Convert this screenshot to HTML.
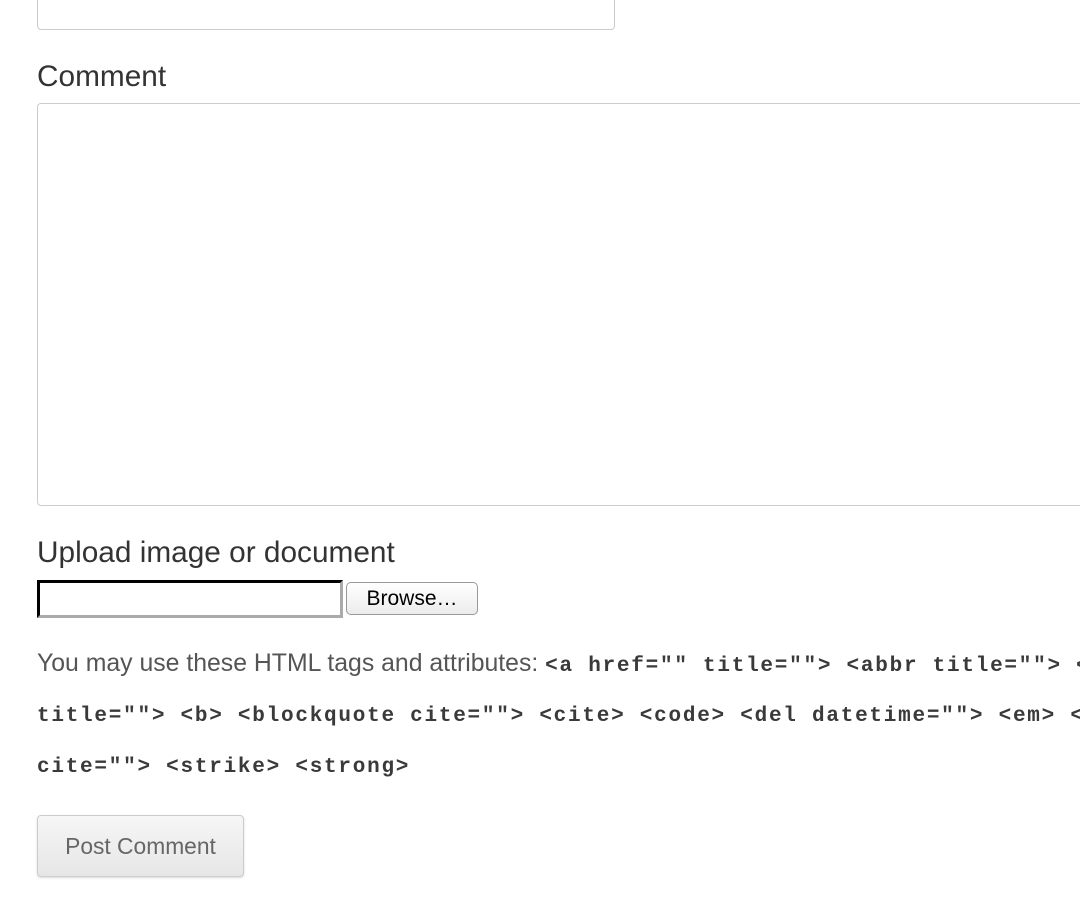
<!DOCTYPE html>
<html><head><style>
html,body{margin:0;width:1080px;height:908px;overflow:hidden}
body{background:#fff;font-family:"Liberation Sans",sans-serif;color:#3a3a3a}
#w{position:relative;width:1080px;height:908px;overflow:hidden}
.a{position:absolute}
.lbl{font-size:29.8px;color:#333;white-space:nowrap}
.code{font-family:"Liberation Mono",monospace;font-weight:bold;font-size:21px;letter-spacing:1.75px;color:#3a3a3a;white-space:nowrap}
.t{font-size:24.8px;color:#555;white-space:nowrap}
</style></head><body><div id="w">
<div class="a" style="left:37px;top:-10px;width:576px;height:38px;border:1px solid #ccc;border-radius:4px"></div>
<div class="a lbl" style="left:37px;top:60px">Comment</div>
<div class="a" style="left:37px;top:103px;width:1100px;height:401px;border:1px solid #ccc;border-radius:4px"></div>
<div class="a lbl" style="left:37px;top:536px">Upload image or document</div>
<div class="a" style="left:37px;top:580px;width:300px;height:32px;border-style:solid;border-width:3px;border-color:#000 #aaa #aaa #000;background:#fff"></div>
<div class="a" style="left:346px;top:582px;width:130px;height:31px;border:1px solid #999;border-radius:5px;background:linear-gradient(#fff,#ececec);font-size:21px;color:#000;text-align:center;line-height:31px">Browse…</div>
<div class="a t" style="left:37px;top:650px">You may use these HTML tags and attributes: <span class="code">&lt;a href="" title=""&gt; &lt;abbr title=""&gt; &lt;acronym</span></div>
<div class="a code" style="left:37px;top:705px">title=""&gt; &lt;b&gt; &lt;blockquote cite=""&gt; &lt;cite&gt; &lt;code&gt; &lt;del datetime=""&gt; &lt;em&gt; &lt;i&gt;</div>
<div class="a code" style="left:37px;top:756px">cite=""&gt; &lt;strike&gt; &lt;strong&gt;</div>
<div class="a" style="left:37px;top:815px;width:205px;height:60px;border:1px solid #ccc;border-radius:4px;background:linear-gradient(#f6f6f6,#e6e6e6);box-shadow:0 1px 2px rgba(0,0,0,.15);font-size:22.8px;color:#666;text-align:center;line-height:60px">Post Comment</div>
</div></body></html>
